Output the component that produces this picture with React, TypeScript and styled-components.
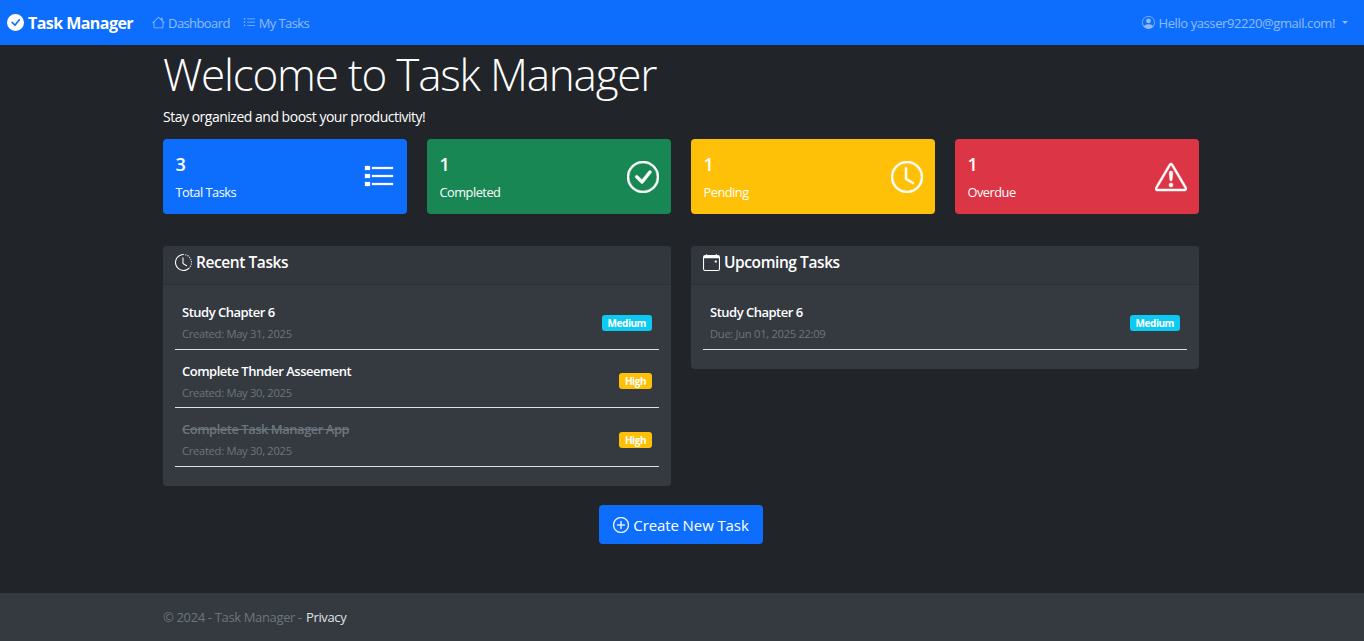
import React from 'react'
import styled, { createGlobalStyle } from 'styled-components'
import {
  BsCalendarEvent,
  BsCheckCircle,
  BsCheckCircleFill,
  BsClock,
  BsClockHistory,
  BsExclamationTriangle,
  BsHouse,
  BsListUl,
  BsPersonCircle,
  BsPlusCircle,
} from 'react-icons/bs'

const GlobalStyle = createGlobalStyle`
  html, body {
    margin: 0;
    padding: 0;
    background: #212529;
    color: #fff;
    font-family: "Open Sans", "Noto Sans", sans-serif;
    font-size: 14px;
  }
`

const Page = styled.div`
  min-height: 641px;
  display: flex;
  flex-direction: column;
`

const Navbar = styled.nav`
  height: 45px;
  background: #0d6efd;
  display: flex;
  align-items: center;
  padding: 0 16px 0 7px;
`

const Brand = styled.a`
  display: flex;
  align-items: center;
  gap: 4px;
  font-size: 16px;
  font-weight: 700;
  letter-spacing: -0.55px;
  color: #fff;
  margin-right: 19px;
`

const NavLink = styled.a`
  display: flex;
  align-items: center;
  gap: 3px;
  font-size: 13px;
  letter-spacing: -0.6px;
  color: rgba(255, 255, 255, 0.55);
  margin-right: 13px;
`

const UserMenu = styled(NavLink)`
  margin: 0 0 0 auto;
  letter-spacing: -0.41px;
`

const Caret = styled.span`
  margin-left: 4px;
  border-top: 3.5px solid currentColor;
  border-left: 3.5px solid transparent;
  border-right: 3.5px solid transparent;
`

const Main = styled.main`
  flex: 1;
  padding: 0 165px 0 163px;
`

const Title = styled.h1`
  margin: 0;
  font-size: 44px;
  line-height: 59px;
  font-weight: 300;
  letter-spacing: -1.2px;
`

const Lead = styled.p`
  margin: 0;
  line-height: 20px;
  padding-top: 3px;
  letter-spacing: -0.49px;
`

const StatGrid = styled.section`
  display: grid;
  grid-template-columns: repeat(4, 1fr);
  gap: 20px;
  margin-top: 12px;
`

const StatCard = styled.div<{ $bg: string }>`
  height: 75px;
  box-sizing: border-box;
  background: ${({ $bg }) => $bg};
  border-radius: 4px;
  padding: 12px 12px 0 12.5px;
  display: flex;
  justify-content: space-between;
`

const StatValue = styled.div`
  font-size: 18px;
  font-weight: 600;
  line-height: 26px;
`

const StatLabel = styled.div`
  font-size: 12.8px;
  letter-spacing: -0.5px;
  line-height: 20px;
  margin-top: 5px;
`

const StatIcon = styled.div`
  align-self: center;
  display: flex;
  font-size: 32px;
  margin: -2px 0 10px;

  svg {
    stroke: currentColor;
    stroke-width: 0.25;
  }
`

const PanelGrid = styled.section`
  display: grid;
  grid-template-columns: 1fr 1fr;
  gap: 20px;
  align-items: start;
  margin-top: 32px;
`

const Panel = styled.div`
  background: #343a40;
  border-radius: 4px;
`

const PanelHeader = styled.h2`
  margin: 0;
  height: 39px;
  box-sizing: border-box;
  padding: 0 12px 6px;
  display: flex;
  align-items: center;
  gap: 4px;
  font-size: 15.5px;
  font-weight: 600;
  letter-spacing: -0.42px;
  border-bottom: 1px solid #2c3136;
  background: #32373d;
  border-radius: 4px 4px 0 0;
`

const PanelBody = styled.div`
  padding: 6.55px 12px 19.3px;
`

const TaskRow = styled.div`
  height: 58.4px;
  box-sizing: border-box;
  padding: 5px 7px 0;
  display: flex;
  align-items: center;
  justify-content: space-between;
  border-bottom: 1px solid #dee2e6;
`

const TaskTitle = styled.div<{ $done?: boolean }>`
  font-size: 13px;
  font-weight: 600;
  letter-spacing: -0.5px;
  line-height: 18px;
  color: ${({ $done }) => ($done ? '#6c757d' : '#fff')};
  text-decoration: ${({ $done }) => ($done ? 'line-through' : 'none')};
`

const TaskMeta = styled.div`
  font-size: 11.2px;
  letter-spacing: -0.3px;
  line-height: 16px;
  margin-top: 5px;
  color: #6c757d;
`

const Badge = styled.span<{ $bg: string }>`
  background: ${({ $bg }) => $bg};
  color: #fff;
  font-size: 10px;
  font-weight: 700;
  letter-spacing: -0.45px;
  line-height: 11px;
  padding: 3px 6px 2px;
  border-radius: 3px;
`

const ActionRow = styled.div`
  display: flex;
  justify-content: center;
  margin-top: 19px;
`

const CreateButton = styled.button`
  height: 39px;
  width: 164px;
  padding: 1px 0 0;
  border: 0;
  border-radius: 4px;
  background: #0d6efd;
  color: #fff;
  font: inherit;
  font-size: 15px;
  letter-spacing: -0.1px;
  display: flex;
  align-items: center;
  justify-content: center;
  gap: 4px;

  svg {
    stroke: currentColor;
    stroke-width: 0.3;
  }
`

const Footer = styled.footer`
  height: 48px;
  background: #343a40;
  color: #6c757d;
  font-size: 13px;
  letter-spacing: -0.35px;
  display: flex;
  align-items: center;
  padding-left: 163px;
`

const FooterLink = styled.a`
  color: #dee2e6;
  margin-left: 4px;
`

function BulletList() {
  return (
    <svg width="32" height="32" viewBox="0 0 32 32" fill="currentColor" stroke="none">
      <rect x="2" y="5" width="5" height="4" />
      <rect x="2" y="13" width="5" height="4" />
      <rect x="2" y="21" width="5" height="4" />
      <rect x="9" y="6" width="21" height="2" />
      <rect x="9" y="14" width="21" height="2" />
      <rect x="9" y="22" width="21" height="2" />
    </svg>
  )
}

const stats = [
  { value: 3, label: 'Total Tasks', bg: '#0d6efd', icon: <BulletList /> },
  { value: 1, label: 'Completed', bg: '#198754', icon: <BsCheckCircle /> },
  { value: 1, label: 'Pending', bg: '#ffc107', icon: <BsClock /> },
  { value: 1, label: 'Overdue', bg: '#dc3545', icon: <BsExclamationTriangle /> },
]

const MEDIUM = { text: 'Medium', bg: '#0dcaf0' }
const HIGH = { text: 'High', bg: '#ffc107' }

interface Task {
  title: string
  meta: string
  badge: { text: string; bg: string }
  done?: boolean
}

const recent: Task[] = [
  { title: 'Study Chapter 6', meta: 'Created: May 31, 2025', badge: MEDIUM },
  { title: 'Complete Thnder Asseement', meta: 'Created: May 30, 2025', badge: HIGH },
  { title: 'Complete Task Manager App', meta: 'Created: May 30, 2025', badge: HIGH, done: true },
]

const upcoming: Task[] = [{ title: 'Study Chapter 6', meta: 'Due: Jun 01, 2025 22:09', badge: MEDIUM }]

function TaskList({ tasks }: { tasks: Task[] }) {
  return (
    <PanelBody>
      {tasks.map((task) => (
        <TaskRow key={task.title}>
          <div>
            <TaskTitle $done={task.done}>{task.title}</TaskTitle>
            <TaskMeta>{task.meta}</TaskMeta>
          </div>
          <Badge $bg={task.badge.bg}>{task.badge.text}</Badge>
        </TaskRow>
      ))}
    </PanelBody>
  )
}

export default function App() {
  return (
    <Page>
      <GlobalStyle />
      <Navbar>
        <Brand>
          <BsCheckCircleFill size={17} />
          Task Manager
        </Brand>
        <NavLink>
          <BsHouse size={13} />
          Dashboard
        </NavLink>
        <NavLink>
          <BsListUl size={13} />
          My Tasks
        </NavLink>
        <UserMenu>
          <BsPersonCircle size={13} />
          Hello yasser92220@gmail.com!
          <Caret />
        </UserMenu>
      </Navbar>
      <Main>
        <Title>Welcome to Task Manager</Title>
        <Lead>Stay organized and boost your productivity!</Lead>
        <StatGrid>
          {stats.map((stat) => (
            <StatCard key={stat.label} $bg={stat.bg}>
              <div>
                <StatValue>{stat.value}</StatValue>
                <StatLabel>{stat.label}</StatLabel>
              </div>
              <StatIcon>{stat.icon}</StatIcon>
            </StatCard>
          ))}
        </StatGrid>
        <PanelGrid>
          <Panel>
            <PanelHeader>
              <BsClockHistory size={17} />
              Recent Tasks
            </PanelHeader>
            <TaskList tasks={recent} />
          </Panel>
          <Panel>
            <PanelHeader>
              <BsCalendarEvent size={17} />
              Upcoming Tasks
            </PanelHeader>
            <TaskList tasks={upcoming} />
          </Panel>
        </PanelGrid>
        <ActionRow>
          <CreateButton>
            <BsPlusCircle size={16} />
            Create New Task
          </CreateButton>
        </ActionRow>
      </Main>
      <Footer>
        © 2024 - Task Manager -<FooterLink>Privacy</FooterLink>
      </Footer>
    </Page>
  )
}
